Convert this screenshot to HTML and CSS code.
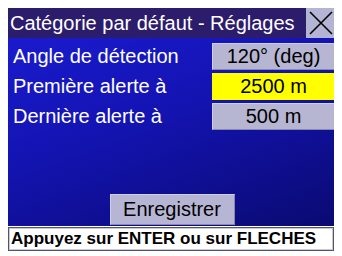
FILE: index.html
```html
<!DOCTYPE html>
<html>
<head>
<meta charset="utf-8">
<link rel="stylesheet" href="styles.css">
</head>
<body>
<div class="screen">
  <div class="titlebar">
    <div class="title">Catégorie par défaut - Réglages</div>
    <div class="close">
      <svg width="30" height="30" viewBox="0 0 30 30"><path d="M4 4 L26 26 M26 4 L4 26" stroke="#000" stroke-width="1.6" fill="none"/></svg>
    </div>
  </div>
  <div class="rows">
    <div class="row"><div class="label">Angle de détection</div><div class="value">120° (deg)</div></div>
    <div class="row"><div class="label">Première alerte à</div><div class="value selected">2500 m</div></div>
    <div class="row"><div class="label">Dernière alerte à</div><div class="value">500 m</div></div>
  </div>
  <div class="footer"><div class="button">Enregistrer</div></div>
</div>
<div class="status">Appuyez sur ENTER ou sur FLECHES</div>
</body>
</html>
```
FILE: styles.css
```css
html, body { background: #fff; }
body { margin: 8px; font-family: "Liberation Sans", Arial, sans-serif; }
.screen {
  width: 328px; height: 218px;
  display: flex; flex-direction: column;
  background: linear-gradient(160deg, #1c1cd4 0%, #1414b4 45%, #0a0a72 100%);
}
.titlebar {
  height: 30px; display: flex; align-items: center;
  background: #2c1c6c; color: #fff; font-size: 20px;
}
.title { padding-left: 2px; flex: 1; }
.close {
  width: 30px; height: 30px; background: #b4b4d4;
  display: flex; align-items: center; justify-content: center;
}
.rows { display: flex; flex-direction: column; gap: 3px; padding-top: 5px; }
.row { display: flex; height: 27px; align-items: center; }
.label { flex: 1; padding-left: 5px; color: #fff; font-size: 20px; }
.value {
  width: 121px; height: 25px; margin-right: 1px;
  background: #b6b6d2; color: #000; font-size: 20px;
  display: flex; align-items: center; justify-content: center;
  border-top: 1px solid #d0d0e4; border-left: 1px solid #d0d0e4;
  border-bottom: 1px solid #8888a8; border-right: 1px solid #8888a8;
}
.value.selected { background: #ffff00; border-color: #ffff00; }
.footer { margin-top: auto; display: flex; justify-content: center; padding-bottom: 1px; }
.button {
  width: 123px; height: 29px; background: #b6b6d4; color: #000; font-size: 20px;
  display: flex; align-items: center; justify-content: center;
  border-top: 1px solid #d0d0e4; border-left: 1px solid #d0d0e4;
  border-bottom: 1px solid #8888a8; border-right: 1px solid #8888a8;
}
.status {
  margin-top: 1px; width: 320px; height: 20px;
  border: 1px solid #55556a; box-shadow: inset 0 0 0 1px #c8c8dc;
  background: #fff; color: #000; font-weight: bold; font-size: 17px;
  padding: 1px 2px; line-height: 20px; white-space: nowrap;
}
```
